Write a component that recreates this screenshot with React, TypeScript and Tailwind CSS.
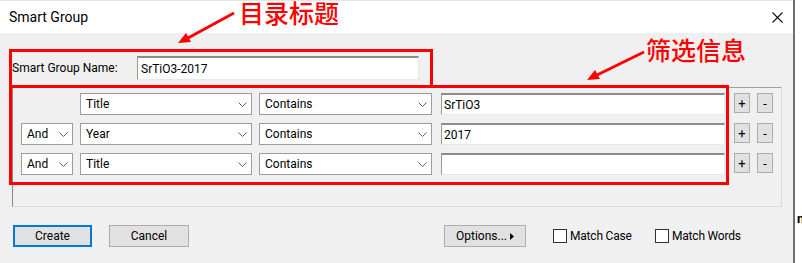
import React from 'react';

type Row = { join: string | null; field: string; op: string; value: string };

const rows: Row[] = [
  { join: null, field: 'Title', op: 'Contains', value: 'SrTiO3' },
  { join: 'And', field: 'Year', op: 'Contains', value: '2017' },
  { join: 'And', field: 'Title', op: 'Contains', value: '' },
];

const Chevron = () => (
  <svg width="9" height="5" viewBox="0 0 9 5" className="shrink-0">
    <path d="M0.5 0.5 L4.5 4.5 L8.5 0.5" fill="none" stroke="#606060" strokeWidth="1" />
  </svg>
);

const Select = ({ value, className }: { value: string; className: string }) => (
  <div className={`h-[22px] bg-white border border-[#9c9c9c] flex items-center justify-between pl-[5px] pr-[4px] ${className}`}>
    <span>{value}</span>
    <Chevron />
  </div>
);

const TextBox = ({ value, className }: { value: string; className: string }) => (
  <div
    className={`bg-white border-t-2 border-l border-r border-b border-t-[#8c8c8c] border-l-[#9a9a9a] border-r-[#e8e8e8] border-b-[#e8e8e8] flex items-center pl-[2px] ${className}`}
  >
    {value}
  </div>
);

const SmallBtn = ({ label }: { label: string }) => (
  <div className="w-[16px] h-[20px] bg-[#e1e1e1] border border-[#adadad] flex items-center justify-center text-[13px] leading-none">
    {label}
  </div>
);

const Checkbox = ({ label, className }: { label: string; className: string }) => (
  <div className={`flex items-center ${className}`}>
    <div className="w-[14px] h-[14px] shrink-0 bg-white border border-[#333333]" />
    <span className="ml-[3px] tracking-[-0.2px]">{label}</span>
  </div>
);

export default function App() {
  return (
    <div className="relative w-[802px] h-[263px] overflow-hidden bg-white font-['Roboto',sans-serif] text-[12px] text-black">
      <div className="flex h-full">
        {/* dialog window */}
        <div className="w-[793px] h-full flex flex-col">
          <div className="h-[33px] shrink-0 bg-white border-t border-[#e6e6e6] flex items-center justify-between pl-[9px] pr-[10px]">
            <span className="text-[14px]">Smart Group</span>
            <svg width="11" height="11" viewBox="0 0 11 11">
              <path d="M0.5 0.5 L10.5 10.5 M10.5 0.5 L0.5 10.5" stroke="#111" strokeWidth="1.1" />
            </svg>
          </div>

          <div className="flex-1 bg-[#f0f0f0] pl-[12px] pt-[23px]">
            <div className="flex items-center h-[24px]">
              <span className="w-[125px]">Smart Group Name:</span>
              <TextBox value="SrTiO3-2017" className="w-[282px] h-[24px] pl-[3px]" />
            </div>

            <div className="mt-[7px] w-[770px] h-[120px] border border-t-[#a0a0a0] border-l-[#8a8a8a] border-r-[#d9d9d9] border-b-[#d9d9d9] pt-[5px] pl-[8px] flex flex-col gap-[8px]">
              {rows.map((r, i) => (
                <div key={i} className="flex items-start">
                  {r.join ? (
                    <Select value={r.join} className="w-[52px]" />
                  ) : (
                    <div className="w-[52px] h-[22px]" />
                  )}
                  <Select value={r.field} className="w-[172px] ml-[7px]" />
                  <Select value={r.op} className="w-[173px] ml-[7px]" />
                  <TextBox value={r.value} className="w-[284px] h-[22px] ml-[9px]" />
                  <div className="ml-[9px] flex gap-[7px]">
                    <SmallBtn label="+" />
                    <SmallBtn label="-" />
                  </div>
                </div>
              ))}
            </div>

            <div className="mt-[18px] flex items-center h-[22px]">
              <div className="ml-[1px] w-[79px] h-[22px] bg-[#e1e1e1] border border-[#0078d7] shadow-[inset_0_0_0_1px_#0078d7] flex items-center justify-center">
                Create
              </div>
              <div className="ml-[17px] w-[80px] h-[22px] bg-[#e1e1e1] border border-[#adadad] flex items-center justify-center">
                Cancel
              </div>
              <div className="ml-[255px] w-[82px] h-[22px] bg-[#e1e1e1] border border-[#adadad] flex items-center justify-center gap-[3px]">
                <span>Options...</span>
                <svg width="4" height="7" viewBox="0 0 4 7">
                  <path d="M0 0 L4 3.5 L0 7 Z" fill="#000" />
                </svg>
              </div>
              <Checkbox label="Match Case" className="ml-[27px] w-[102px]" />
              <Checkbox label="Match Words" className="" />
            </div>
          </div>
        </div>
        <div className="w-[2px] h-full bg-[#6f6f6f]" />
        <div className="flex-1 h-full bg-white pt-[209px] pl-[2px] overflow-hidden">
          <span className="text-[13px] font-bold">n</span>
        </div>
      </div>

      {/* annotations */}
      <div className="absolute left-[9px] top-[49px] w-[424px] h-[39px] border-[3px] border-[#ff0000]" />
      <div className="absolute left-[9px] top-[85px] w-[720px] h-[100px] border-[3px] border-[#ff0000]" />
      <span className="absolute left-[239px] top-0 text-[25px] leading-[25px] text-[#ff0000] font-['Noto_Sans_CJK_SC',sans-serif] font-medium">
        目录标题
      </span>
      <span className="absolute left-[646px] top-[37px] text-[25px] leading-[25px] text-[#ff0000] font-['Noto_Sans_CJK_SC',sans-serif] font-medium">
        筛选信息
      </span>
      <svg className="absolute left-0 top-0 pointer-events-none" width="802" height="263" viewBox="0 0 802 263">
        <line x1="234" y1="13" x2="188" y2="38" stroke="#ff0000" strokeWidth="3" />
        <polygon points="178,43 191,42 186,33" fill="#ff0000" />
        <line x1="644" y1="52" x2="597" y2="75" stroke="#ff0000" strokeWidth="3" />
        <polygon points="587,80 600,79 595,70" fill="#ff0000" />
      </svg>
    </div>
  );
}
